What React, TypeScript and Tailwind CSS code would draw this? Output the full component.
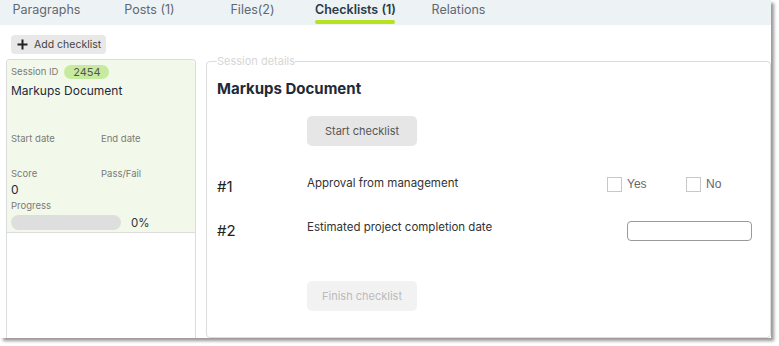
import React from "react";

const font = { fontFamily: "Inter, 'Open Sans', sans-serif" };

function Tab({ label, active }: { label: string; active?: boolean }) {
  return (
    <div className="w-[103px] flex flex-col items-center pt-[1px]">
      <div className="flex flex-col items-start">
        <span
          className={
            active
              ? "text-[12.5px] leading-[17px] font-semibold text-[#2b3a48]"
              : "text-[12.5px] leading-[17px] text-[#5f6770]"
          }
        >
          {label}
        </span>
        {active && <div className="mt-[2px] h-[4px] w-[80px] rounded-full bg-[#b6e21f]" />}
      </div>
    </div>
  );
}

export default function App() {
  return (
    <div className="w-[779px] h-[346px] bg-white overflow-hidden" style={font}>
      <div className="w-[771px] h-[338px] bg-white flex flex-col shadow-[3px_3px_3px_rgba(0,0,0,0.4)]">
        {/* tabs */}
        <div className="h-[25px] bg-[#edf2f5] flex ml-[-5px] shrink-0">
          <Tab label="Paragraphs" />
          <Tab label="Posts (1)" />
          <Tab label="Files(2)" />
          <Tab label="Checklists (1)" active />
          <Tab label="Relations" />
        </div>

        {/* add button */}
        <div className="pl-[11px] pt-[10px] h-[34px] shrink-0">
          <button className="h-[19px] w-[95px] rounded-[4px] bg-[#e8e8e8] flex items-center gap-[6px] pl-[6px] text-[10.5px] text-[#444] whitespace-nowrap">
            <svg width="11" height="11" viewBox="0 0 11 11" className="shrink-0">
              <path d="M5.5 0.5v10M0.5 5.5h10" stroke="#222" strokeWidth="2" />
            </svg>
            <span>Add checklist</span>
          </button>
        </div>

        {/* columns */}
        <div className="flex flex-1 min-h-0">
          {/* left list */}
          <div className="ml-[6px] w-[190px] border-x border-t border-[#dcdcdc] rounded-t-[4px] flex flex-col">
            <div className="h-[173px] bg-[#f2f9ea] border-b border-[#dcdcdc] rounded-t-[4px] px-[4px] pt-[5px] flex flex-col">
              <div className="flex items-center gap-[6px] h-[14px]">
                <span className="text-[9.5px] text-[#7a7a7a]">Session ID</span>
                <span className="w-[45px] h-[14px] rounded-full bg-[#c6eb9e] text-[11px] text-[#555] flex items-center justify-center">
                  2454
                </span>
              </div>
              <div className="mt-[4px] text-[12px] leading-[16px] text-[#1e2a3a]">Markups Document</div>
              <div className="mt-[33px] flex text-[9.5px] text-[#7a7a7a] leading-[13px]">
                <span className="w-[90px]">Start date</span>
                <span>End date</span>
              </div>
              <div className="mt-[22px] flex text-[9.5px] text-[#7a7a7a] leading-[13px]">
                <span className="w-[90px]">Score</span>
                <span>Pass/Fail</span>
              </div>
              <div className="mt-[2px] text-[12px] leading-[16px] text-[#1e2a3a]">0</div>
              <div className="mt-[1px] text-[9.5px] text-[#7a7a7a] leading-[13px]">Progress</div>
              <div className="mt-[1px] flex items-center">
                <div className="w-[110px] h-[15px] rounded-full bg-[#dedede]" />
                <span className="ml-[10px] text-[11.5px] text-[#333] mt-[2px]">0%</span>
              </div>
            </div>
            <div className="flex-1 bg-white" />
          </div>

          {/* details */}
          <fieldset className="ml-[10px] flex-1 border border-[#dcdcdc] rounded-[4px] mt-[-4px] pl-[10px] pr-0 min-w-0">
            <legend className="text-[11px] text-[#d6d6d6] leading-[12px] px-0">Session details</legend>
            <div className="mt-[12px] text-[15px] leading-[20px] font-bold text-[#1f2a36]">Markups Document</div>
            <div className="mt-[17px] ml-[90px]">
              <button className="w-[110px] h-[30px] rounded-[5px] bg-[#e6e6e6] text-[11px] text-[#555]">
                Start checklist
              </button>
            </div>

            <div className="mt-[29px] flex items-start h-[44px]">
              <span className="w-[90px] text-[15px] leading-[18px] text-[#222] mt-[3px]">#1</span>
              <span className="w-[300px] text-[11.5px] leading-[16px] text-[#333]">Approval from management</span>
              <div className="flex items-center" style={{ fontFamily: "'Liberation Sans', Arial, sans-serif" }}>
                <span className="w-[15px] h-[15px] border border-[#c8c8c8]" />
                <span className="ml-[5px] w-[59px] text-[12px] text-[#666]">Yes</span>
                <span className="w-[15px] h-[15px] border border-[#c8c8c8]" />
                <span className="ml-[5px] text-[12px] text-[#666]">No</span>
              </div>
            </div>

            <div className="flex items-start h-[50px]">
              <span className="w-[90px] text-[15px] leading-[18px] text-[#222] mt-[3px]">#2</span>
              <span className="w-[320px] text-[11.5px] leading-[16px] text-[#333]">Estimated project completion date</span>
              <div className="w-[125px] h-[20px] rounded-[4px] border border-[#999] mt-[2px]" />
            </div>

            <div className="mt-[12px] ml-[90px]">
              <button className="w-[110px] h-[30px] rounded-[5px] bg-[#f2f2f2] text-[11px] text-[#bbb]">
                Finish checklist
              </button>
            </div>
          </fieldset>
        </div>
      </div>
    </div>
  );
}
